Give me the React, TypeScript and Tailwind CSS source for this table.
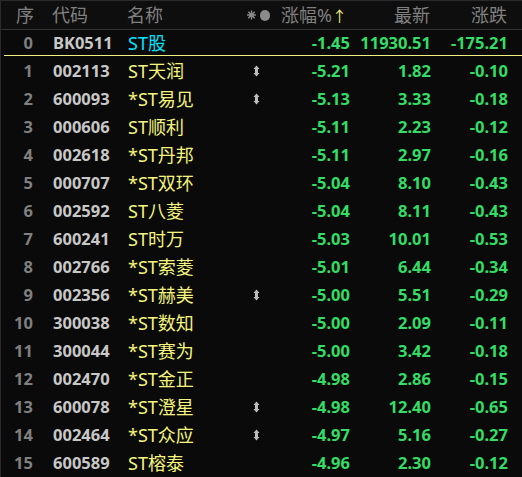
import React from "react";

type Row = { i: number; code: string; name: string; icon?: boolean; pct: string; last: string; chg: string };

const rows: Row[] = [
  { i: 1, code: "002113", name: "ST天润", icon: true, pct: "-5.21", last: "1.82", chg: "-0.10" },
  { i: 2, code: "600093", name: "*ST易见", icon: true, pct: "-5.13", last: "3.33", chg: "-0.18" },
  { i: 3, code: "000606", name: "ST顺利", pct: "-5.11", last: "2.23", chg: "-0.12" },
  { i: 4, code: "002618", name: "*ST丹邦", pct: "-5.11", last: "2.97", chg: "-0.16" },
  { i: 5, code: "000707", name: "*ST双环", pct: "-5.04", last: "8.10", chg: "-0.43" },
  { i: 6, code: "002592", name: "ST八菱", pct: "-5.04", last: "8.11", chg: "-0.43" },
  { i: 7, code: "600241", name: "ST时万", pct: "-5.03", last: "10.01", chg: "-0.53" },
  { i: 8, code: "002766", name: "*ST索菱", pct: "-5.01", last: "6.44", chg: "-0.34" },
  { i: 9, code: "002356", name: "*ST赫美", icon: true, pct: "-5.00", last: "5.51", chg: "-0.29" },
  { i: 10, code: "300038", name: "*ST数知", pct: "-5.00", last: "2.09", chg: "-0.11" },
  { i: 11, code: "300044", name: "*ST赛为", pct: "-5.00", last: "3.42", chg: "-0.18" },
  { i: 12, code: "002470", name: "*ST金正", pct: "-4.98", last: "2.86", chg: "-0.15" },
  { i: 13, code: "600078", name: "*ST澄星", icon: true, pct: "-4.98", last: "12.40", chg: "-0.65" },
  { i: 14, code: "002464", name: "*ST众应", icon: true, pct: "-4.97", last: "5.16", chg: "-0.27" },
  { i: 15, code: "600589", name: "ST榕泰", pct: "-4.96", last: "2.30", chg: "-0.12" },
];

const grid = "grid grid-cols-[52px_75px_122px_20px_80px_81px_77px] items-center";
const num = "font-['Noto_Sans','Liberation_Sans',sans-serif] font-bold text-[16.5px]";
const cjk = "font-['Noto_Sans','Noto_Sans_CJK_SC',sans-serif]";

function SortIcon() {
  return (
    <svg width="7" height="12" viewBox="0 0 7 12" className="ml-[3px]">
      <path d="M3.5 0.5 L6.5 4 L5 4 L5 8 L6.5 8 L3.5 11.5 L0.5 8 L2 8 L2 4 L0.5 4 Z" fill="#bdbdbd" />
    </svg>
  );
}

function Gear() {
  return (
    <svg width="10" height="10" viewBox="0 0 10 10">
      <circle cx="5" cy="5" r="2.6" fill="#8a8a8a" />
      <g stroke="#8a8a8a" strokeWidth="1.6">
        <line x1="5" y1="0" x2="5" y2="10" />
        <line x1="0" y1="5" x2="10" y2="5" />
        <line x1="1.4" y1="1.4" x2="8.6" y2="8.6" />
        <line x1="8.6" y1="1.4" x2="1.4" y2="8.6" />
      </g>
    </svg>
  );
}

export default function App() {
  return (
    <div className="w-[522px] h-[477px] bg-[#0a0a0a] overflow-hidden border-l border-t border-[#2a2a2a]">
      {/* header */}
      <div className={`${grid} h-[29px] border-b border-[#333] bg-[#0e0e0e] text-[#808080] text-[18px] ${cjk}`}>
        <div className="pl-[15px]">序</div>
        <div className="-ml-[1px]">代码</div>
        <div className="-ml-[1px]">名称</div>
        <div className="flex items-center gap-[4px] whitespace-nowrap -ml-[3px]">
          <Gear />
          <span className="inline-block w-[11px] h-[11px] rounded-full bg-[#8a8a8a]" />
        </div>
        <div className="text-right whitespace-nowrap pr-[3px]">
          涨幅%<span className="text-[#f0f080] text-[15px]">↑</span>
        </div>
        <div className="text-right pr-[1px]">最新</div>
        <div className="text-right pr-[1px]">涨跌</div>
      </div>
      {/* row 0 */}
      <div className={`${grid} h-[25px]`}>
        <div className={`${num} text-right pr-[20px] text-[#808080]`}>0</div>
        <div className={`${num} text-[#c8c8c8]`}>BK0511</div>
        <div className={`${cjk} text-[18px] text-[#00e5ff]`}>ST股</div>
        <div />
        <div className={`${num} text-right text-[#33dd66]`}>-1.45</div>
        <div className={`${num} text-right text-[#33dd66]`}>11930.51</div>
        <div className={`${num} text-right text-[#33dd66]`}>-175.21</div>
      </div>
      <div className="ml-[3px] h-px bg-[#f0f080]" />
      <div className="h-px" />
      {rows.map((r) => (
        <div key={r.i} className={`${grid} h-[28px]`}>
          <div className={`${num} text-right pr-[20px] text-[#808080]`}>{r.i}</div>
          <div className={`${num} text-[#c8c8c8]`}>{r.code}</div>
          <div className={`${cjk} text-[18px] text-[#f5f57e] whitespace-nowrap`}>{r.name}</div>
          <div className="flex items-center">{r.icon ? <SortIcon /> : null}</div>
          <div className={`${num} text-right text-[#33dd66]`}>{r.pct}</div>
          <div className={`${num} text-right text-[#33dd66]`}>{r.last}</div>
          <div className={`${num} text-right text-[#33dd66]`}>{r.chg}</div>
        </div>
      ))}
    </div>
  );
}
